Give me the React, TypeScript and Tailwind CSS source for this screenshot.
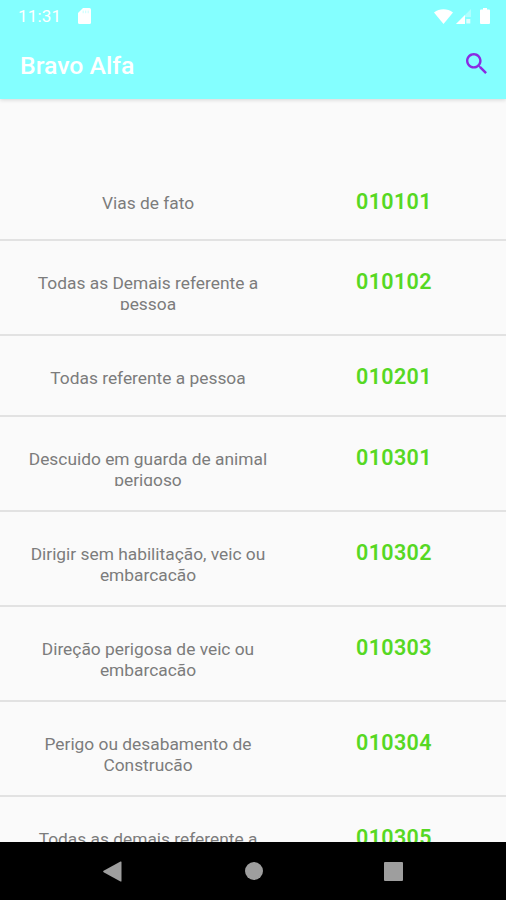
import React from 'react';

interface Occurrence {
  code: string;
  lines: string[];
}

const occurrences: Occurrence[] = [
  { code: '010101', lines: ['Vias de fato'] },
  { code: '010102', lines: ['Todas as Demais referente a', 'pessoa'] },
  { code: '010201', lines: ['Todas referente a pessoa'] },
  { code: '010301', lines: ['Descuido em guarda de animal', 'perigoso'] },
  { code: '010302', lines: ['Dirigir sem habilitação, veic ou', 'embarcação'] },
  { code: '010303', lines: ['Direção perigosa de veic ou', 'embarcação'] },
  { code: '010304', lines: ['Perigo ou desabamento de', 'Construção'] },
  { code: '010305', lines: ['Todas as demais referente a', 'pessoa'] },
];

const StatusBar = () => (
  <div className="flex h-8 shrink-0 items-center justify-between pl-[18px] pr-[16px] text-white">
    <div className="flex items-center gap-[15px]">
      <span className="w-[45px] whitespace-nowrap text-[17px] leading-8 tracking-[0.2px]">11:31</span>
      <svg width="13" height="16" viewBox="0 0 13 16" fill="currentColor" className="block">
        <path d="M5 0h6.5A1.5 1.5 0 0 1 13 1.5v13a1.5 1.5 0 0 1-1.5 1.5h-10A1.5 1.5 0 0 1 0 14.5V5z" />
        <path d="M5.2 2.6v2.6M7.7 2.6v2.6M10.2 2.6v2.6" stroke="#84ffff" strokeWidth="1" opacity="0.45" />
      </svg>
    </div>
    <div className="flex items-center">
      <svg width="19" height="15" viewBox="0 0 19 15" fill="currentColor">
        <path d="M0 3.4a15.5 15.5 0 0 1 19 0L9.5 15z" />
      </svg>
      <svg width="15" height="15" viewBox="0 0 15 15" fill="currentColor" className="ml-[3px]">
        <path d="M15 0v8H9v7H0z" opacity="0.35" />
        <path d="M9 6v9H0z" />
        <path d="M10.3 10h4v4.5h-4z" opacity="0.75" />
      </svg>
      <svg width="10" height="16" viewBox="0 0 10 16" fill="currentColor" className="ml-[9px]">
        <path d="M3 0h4v1.6h2a1 1 0 0 1 1 1V15a1 1 0 0 1-1 1H1a1 1 0 0 1-1-1V2.6a1 1 0 0 1 1-1h2z" />
      </svg>
    </div>
  </div>
);

const AppBar = () => (
  <div className="flex h-[67px] shrink-0 items-center justify-between pl-[20px] pr-[19px]">
    <h1 className="whitespace-nowrap pt-[1px] text-[24.8px] font-medium leading-[66px] text-white">Bravo Alfa</h1>
    <svg width="21" height="21" viewBox="3 3 17.5 17.5" fill="#8a2be2" className="-mt-[4px]">
      <path d="M15.5 14h-.79l-.28-.27C15.41 12.59 16 11.11 16 9.5 16 5.91 13.09 3 9.5 3S3 5.91 3 9.5 5.91 16 9.5 16c1.61 0 3.09-.59 4.23-1.57l.27.28v.79l5 4.99L20.49 19l-4.99-5zm-6 0C7.01 14 5 11.99 5 9.5S7.01 5 9.5 5 14 7.01 14 9.5 11.99 14 9.5 14z" />
    </svg>
  </div>
);

const OccurrenceRow = ({ item }: { item: Occurrence }) => {
  const single = item.lines.length === 1;

  return (
    <li className={`flex shrink-0 border-b-2 border-[#e2e2e2] ${single ? 'h-[80.6px]' : 'h-[95.1px]'}`}>
      {/* fixed height cuts the descenders of the second line */}
      <div className={`mt-[32px] w-[296px] shrink-0 overflow-hidden text-center text-[17.35px] leading-[20.6px] text-[#7c7c7c] ${single ? 'h-[26px]' : 'h-[36.6px]'}`}>
        {item.lines.map(line => (
          <p key={line} className="whitespace-nowrap">{line}</p>
        ))}
      </div>
      <span className="mt-[28px] ml-[60px] text-[21.5px] font-semibold leading-[26px] tracking-[0.35px] text-[#56d823]">{item.code}</span>
    </li>
  );
};

const NavBar = () => (
  <div className="flex h-[58px] shrink-0 items-center justify-between bg-black px-[103px]">
    <svg width="19" height="21" viewBox="0 0 19 21" fill="#9e9e9e">
      <path d="M17.5 0.5q1 -.4 1 .6v18.8q0 1-1 .6L.6 11.2q-1-.7 0-1.4z" />
    </svg>
    <div className="ml-[2px] h-[18px] w-[18px] rounded-full bg-[#9e9e9e]" />
    <div className="h-[19px] w-[19px] rounded-[1px] bg-[#9e9e9e]" />
  </div>
);

export default function App() {
  return (
    <div className="flex h-[900px] w-[506px] flex-col overflow-hidden bg-[#fafafa] font-['Roboto',sans-serif]">
      <header className="z-10 shrink-0 bg-[#84ffff] shadow-[0_1px_4px_rgba(0,0,0,0.15)]">
        <StatusBar />
        <AppBar />
      </header>
      <ul className="min-h-0 flex-1 overflow-hidden pt-[61.8px]">
        {occurrences.map(item => (
          <OccurrenceRow key={item.code} item={item} />
        ))}
      </ul>
      <NavBar />
    </div>
  );
}
